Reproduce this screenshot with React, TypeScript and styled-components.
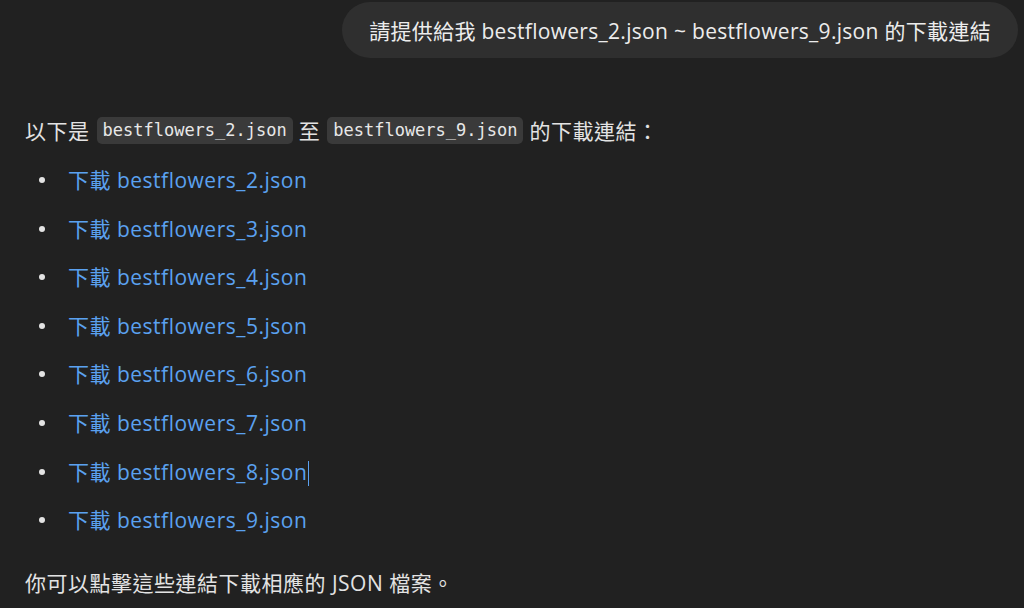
import React from 'react'
import styled, { createGlobalStyle } from 'styled-components'

const GlobalStyle = createGlobalStyle`
    html, body {
        margin: 0;
        padding: 0;
        background: #212121;
    }
    body {
        font-family: 'Open Sans', 'Noto Sans CJK TC', sans-serif;
        color: #e3e3e3;
    }
`

const Page = styled.div`
    width: 1024px;
    height: 608px;
    overflow: hidden;
    box-sizing: border-box;
    padding: 2px 6px 0 25px;
`

const UserRow = styled.div`
    display: flex;
    justify-content: flex-end;
`

const Bubble = styled.div`
    height: 56px;
    display: flex;
    align-items: center;
    padding: 0 27px;
    border-radius: 28px;
    background: #2f2f2f;
    font-size: 21px;
    letter-spacing: 0.3px;
    color: #ececec;
    white-space: nowrap;
`

const Answer = styled.div`
    margin-top: 59px;
    font-size: 21px;
    letter-spacing: 0.5px;
`

const Para = styled.p`
    margin: 0;
    line-height: 28px;
    white-space: nowrap;
`

const Code = styled.code`
    display: inline-block;
    font-family: 'DejaVu Sans Mono', 'Liberation Mono', monospace;
    font-size: 17px;
    letter-spacing: 0;
    line-height: 27px;
    padding: 0 6px;
    margin: 0 6px 0 7px;
    border-radius: 5px;
    background: #3a3a3a;
    color: #e8e8e8;
    vertical-align: top;
`

const List = styled.ul`
    list-style: none;
    margin: 21px 0 0;
    padding: 0;
    display: flex;
    flex-direction: column;
    gap: 20.6px;
`

const Item = styled.li`
    position: relative;
    padding-left: 43px;
    line-height: 28px;

    &::before {
        content: '';
        position: absolute;
        left: 14px;
        top: 11px;
        width: 6px;
        height: 6px;
        border-radius: 50%;
        background: #e3e3e3;
    }
`

const Link = styled.a`
    color: #5ba1f0;
    text-decoration: none;
`

const Caret = styled.span`
    display: inline-block;
    width: 1px;
    height: 25px;
    margin-left: 1px;
    background: #5ba1f0;
    vertical-align: -6px;
`

const Closing = styled(Para)`
    margin-top: 35px;
`

const files = [2, 3, 4, 5, 6, 7, 8, 9]

export default function App() {
    return (
        <>
            <GlobalStyle />
            <Page>
                <UserRow>
                    <Bubble>請提供給我 bestflowers_2.json ~ bestflowers_9.json 的下載連結</Bubble>
                </UserRow>
                <Answer>
                    <Para>
                        以下是<Code>bestflowers_2.json</Code>至<Code>bestflowers_9.json</Code>的下載連結：
                    </Para>
                    <List>
                        {files.map((n) => (
                            <Item key={n}>
                                <Link href="#">下載 bestflowers_{n}.json</Link>
                                {n === 8 && <Caret />}
                            </Item>
                        ))}
                    </List>
                    <Closing>你可以點擊這些連結下載相應的 JSON 檔案。</Closing>
                </Answer>
            </Page>
        </>
    )
}
